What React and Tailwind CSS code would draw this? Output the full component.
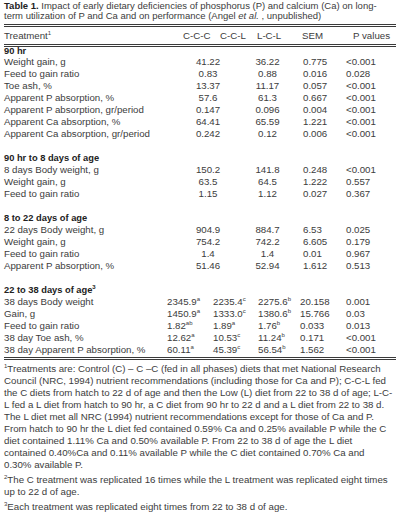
import React from 'react'

const sec1 = [
  ['Weight gain, g', '41.22', '36.22', '0.775', '<0.001'],
  ['Feed to gain ratio', '0.83', '0.88', '0.016', '0.028'],
  ['Toe ash, %', '13.37', '11.17', '0.057', '<0.001'],
  ['Apparent P absorption, %', '57.6', '61.3', '0.667', '<0.001'],
  ['Apparent P absorption, gr/period', '0.147', '0.096', '0.004', '<0.001'],
  ['Apparent Ca absorption, %', '64.41', '65.59', '1.221', '<0.001'],
  ['Apparent Ca absorption, gr/period', '0.242', '0.12', '0.006', '<0.001'],
]

const sec2 = [
  ['8 days Body weight, g', '150.2', '141.8', '0.248', '<0.001'],
  ['Weight gain, g', '63.5', '64.5', '1.222', '0.557'],
  ['Feed to gain ratio', '1.15', '1.12', '0.027', '0.367'],
]

const sec3 = [
  ['22 days Body weight, g', '904.9', '884.7', '6.53', '0.025'],
  ['Weight gain, g', '754.2', '742.2', '6.605', '0.179'],
  ['Feed to gain ratio', '1.4', '1.4', '0.01', '0.967'],
  ['Apparent P absorption, %', '51.46', '52.94', '1.612', '0.513'],
]

const sec4 = [
  ['38 days Body weight', ['2345.9', 'a'], ['2235.4', 'c'], ['2275.6', 'b'], '20.158', '0.001'],
  ['Gain, g', ['1450.9', 'a'], ['1333.0', 'c'], ['1380.6', 'b'], '15.766', '0.03'],
  ['Feed to gain ratio', ['1.82', 'ab'], ['1.89', 'a'], ['1.76', 'b'], '0.033', '0.013'],
  ['38 day Toe ash, %', ['12.62', 'a'], ['10.53', 'c'], ['11.24', 'b'], '0.171', '<0.001'],
  ['38 day Apparent P absorption, %', ['60.11', 'a'], ['45.39', 'c'], ['56.54', 'b'], '1.562', '<0.001'],
]

const footnote1 = [
  'Treatments are: Control (C) – C –C (fed in all phases) diets that met National Research',
  'Council (NRC, 1994) nutrient recommendations (including those for Ca and P); C-C-L fed',
  'the C diets from hatch to 22 d of age and then the Low (L) diet from 22 to 38 d of age; L-C-',
  'L fed a L diet from hatch to 90 hr, a C diet from 90 hr to 22 d and a L diet from 22 to 38 d.',
  'The L diet met all NRC (1994) nutrient recommendations except for those of Ca and P.',
  'From hatch to 90 hr the L diet fed contained 0.59% Ca and 0.25% available P while the C',
  'diet contained 1.11% Ca and 0.50% available P. From 22 to 38 d of age the L diet',
  'contained 0.40%Ca and 0.11% available P while the C diet contained 0.70% Ca and',
  '0.30% available P.',
]

const Sup = ({ children }) => (
  <span className="align-top text-[6px] leading-none">{children}</span>
)

const Rule = () => <div className="h-[3px] border-y border-[#3a3a3a]" />

const SectionTitle = ({ children, first }) => (
  <div className={`${first ? 'h-[9px] leading-[9px]' : 'h-[12px]'} font-bold text-[9.3px] text-[#222] whitespace-nowrap`}>
    {children}
  </div>
)

const Blank = () => <div className="h-[12px]" />

const TwoValRow = ({ row }) => (
  <div className="flex h-[12px] whitespace-nowrap">
    <div className="w-[178px]">{row[0]}</div>
    <div className="w-[52px] text-center">{row[1]}</div>
    <div className="w-[67px] text-center">{row[2]}</div>
    <div className="w-[45px] pl-[2px]">{row[3]}</div>
    <div className="flex-1">{row[4]}</div>
  </div>
)

const FourValRow = ({ row }) => (
  <div className="flex h-[12px] whitespace-nowrap">
    <div className="w-[163px]">{row[0]}</div>
    {[row[1], row[2], row[3]].map(([v, s], i) => (
      <div key={i} className={i === 0 ? 'w-[46px]' : i === 1 ? 'w-[45px]' : 'w-[42px]'}>
        {v}
        <Sup>{s}</Sup>
      </div>
    ))}
    <div className="w-[46px]">{row[4]}</div>
    <div className="flex-1">{row[5]}</div>
  </div>
)

export default function App() {
  return (
    <div className="w-[400px] h-[520px] bg-white px-[4px] text-[9.7px] leading-[12px] text-[#3c3c3c] font-[Liberation_Sans,Arial,sans-serif] overflow-hidden">
      {/* caption */}
      <div className="text-[9.5px] leading-[10px] whitespace-nowrap pt-[1px]">
        <div>
          <span className="font-bold text-[#222]">Table 1.</span>{'  '}Impact of early dietary deficiencies of phosphorus (P) and calcium (Ca) on long-
        </div>
        <div>term utilization of P and Ca and on performance (Angel <i>et al.</i> , unpublished)</div>
      </div>
      <div className="mt-[3px]">
        <Rule />
      </div>

      {/* header */}
      <div className="flex h-[17px] items-center whitespace-nowrap">
        <div className="w-[179px]">
          Treatment<Sup>1</Sup>
        </div>
        <div className="w-[37px]">C-C-C</div>
        <div className="w-[37px]">C-C-L</div>
        <div className="w-[45px]">L-C-L</div>
        <div className="w-[45px]">SEM</div>
        <div className="flex-1 text-right pr-[6px]">P values</div>
      </div>
      <Rule />

      <SectionTitle first>90 hr</SectionTitle>
      {sec1.map((r) => (
        <TwoValRow key={r[0]} row={r} />
      ))}

      <Blank />
      <SectionTitle>90 hr to 8 days of age</SectionTitle>
      {sec2.map((r) => (
        <TwoValRow key={r[0]} row={r} />
      ))}

      <Blank />
      <SectionTitle>8 to 22 days of age</SectionTitle>
      {sec3.map((r) => (
        <TwoValRow key={r[0]} row={r} />
      ))}

      <Blank />
      <SectionTitle>
        22 to 38 days of age<Sup>3</Sup>
      </SectionTitle>
      {sec4.map((r) => (
        <FourValRow key={r[0]} row={r} />
      ))}

      <div className="mt-[1px]">
        <Rule />
      </div>

      {/* footnotes */}
      <div className="pt-[3px] whitespace-nowrap">
        {footnote1.map((line, i) => (
          <div key={i}>
            {i === 0 && <Sup>1</Sup>}
            {line}
          </div>
        ))}
        <div className="mt-[3px]">
          <Sup>2</Sup>The C treatment was replicated 16 times while the L treatment was replicated eight times
        </div>
        <div>up to 22 d of age.</div>
        <div className="mt-[3px]">
          <Sup>3</Sup>Each treatment was replicated eight times from 22 to 38 d of age.
        </div>
      </div>
    </div>
  )
}
